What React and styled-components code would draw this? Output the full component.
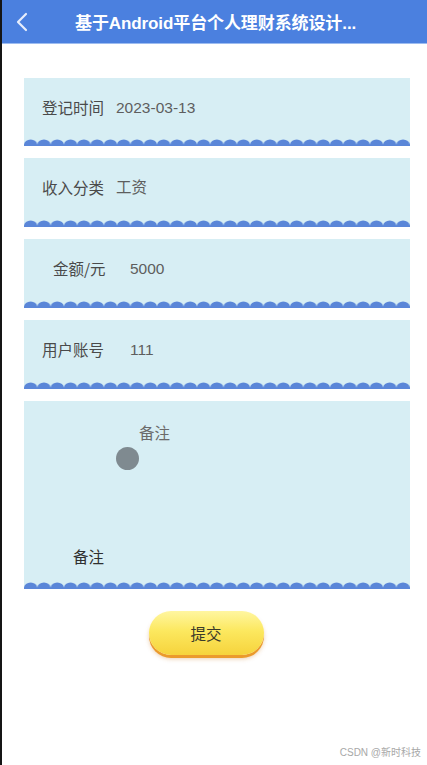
import React from "react";
import styled, { createGlobalStyle } from "styled-components";

const Global = createGlobalStyle`
  html, body { margin: 0; padding: 0; background: #fff; }
  body { font-family: "Liberation Sans", "Noto Sans CJK SC", sans-serif; }
  * { box-sizing: border-box; }
`;

const Screen = styled.div`
  width: 427px;
  height: 765px;
  border-left: 2px solid #151515;
  background: #fff;
  display: flex;
  flex-direction: column;
  position: relative;
  overflow: hidden;
`;

const Header = styled.header`
  height: 44px;
  background: #4b80df;
  display: flex;
  align-items: center;
  border-bottom: 1px solid #9dbcf0;
  flex-shrink: 0;
`;

const Back = styled.button`
  border: 0;
  background: transparent;
  padding: 0;
  margin-left: 12px;
  width: 16px;
  height: 24px;
  display: flex;
  align-items: center;
  justify-content: center;
`;

const Title = styled.h1`
  margin: 0 0 0 45px;
  color: #fff;
  font-family: "Liberation Sans", "Noto Sans CJK SC", sans-serif;
  font-weight: 700;
  font-size: 17px;
  letter-spacing: -0.1px;
`;

const Form = styled.main`
  display: flex;
  flex-direction: column;
  gap: 12px;
  padding: 34px 17px 0 22px;
`;

const Card = styled.div`
  background: #d7eef4;
  display: flex;
  flex-direction: column;
  height: ${(p) => p.$h}px;
`;

const Row = styled.div`
  flex: 1;
  display: flex;
  align-items: flex-start;
  padding: 18px 0 0 ${(p) => p.$pl}px;
  font-family: "Noto Sans CJK SC", "Liberation Sans", sans-serif;
  font-size: 15.5px;
`;

const Label = styled.span`
  color: #4a4a4a;
  width: ${(p) => p.$w}px;
  flex-shrink: 0;
`;

const Value = styled.span`
  color: #5e5e5e;
  font-family: "Liberation Sans", "Noto Sans CJK SC", sans-serif;
  font-size: 15.5px;
  line-height: 23px;
`;

const NoteBody = styled.div`
  flex: 1;
  display: flex;
  flex-direction: column;
  font-family: "Noto Sans CJK SC", "Liberation Sans", sans-serif;
  font-size: 15.5px;
`;

const NoteHint = styled.span`
  color: #6a6a6a;
  margin: 20px 0 0 115px;
  line-height: 22px;
`;

const Dot = styled.span`
  width: 23px;
  height: 23px;
  border-radius: 50%;
  background: #7f8a90;
  margin: 4px 0 0 92px;
  filter: blur(0.5px);
`;

const NoteLabel = styled.span`
  color: #2f2f2f;
  margin: auto 0 15px 49px;
  line-height: 22px;
`;

const WaveSvg = styled.svg`
  display: block;
  width: 100%;
  height: 7px;
  flex-shrink: 0;
`;

const Wave = ({ id }) => (
  <WaveSvg viewBox="0 0 386 7" preserveAspectRatio="none">
    <defs>
      <pattern id={id} x="0" y="0" width="13.3" height="7" patternUnits="userSpaceOnUse">
        <path d="M0 7 L0 6 A6.65 5.5 0 0 1 13.3 6 L13.3 7 Z" fill="#5a86d8" />
      </pattern>
    </defs>
    <rect x="0" y="0" width="386" height="7" fill={`url(#${id})`} />
    <rect x="0" y="5.5" width="386" height="1.5" fill="#5a86d8" />
  </WaveSvg>
);

const BtnWrap = styled.div`
  display: flex;
  justify-content: center;
  padding: 22px 0 0 0;
  margin-left: -17px;
`;

const Submit = styled.button`
  width: 115px;
  height: 44px;
  border: 0;
  border-radius: 22px;
  background: linear-gradient(180deg, #fff6a0 0%, #fce85f 45%, #f6d33c 100%);
  box-shadow: 0 3px 0 #eb9a2c, 0 4px 4px rgba(200, 120, 30, 0.35);
  color: #3a3a2a;
  font-family: "Noto Sans CJK SC", sans-serif;
  font-size: 15.5px;
  padding: 0;
`;

const Watermark = styled.div`
  position: absolute;
  right: 6px;
  bottom: 6px;
  color: #a8a8a8;
  font-family: "Liberation Sans", "Noto Sans CJK SC", sans-serif;
  font-size: 10px;
`;

const fields = [
  { label: "登记时间", value: "2023-03-13", pl: 18, w: 74 },
  { label: "收入分类", value: "工资", pl: 18, w: 74 },
  { label: "金额/元", value: "5000", pl: 29, w: 77 },
  { label: "用户账号", value: "111", pl: 18, w: 88 },
];

export default function App() {
  return (
    <>
      <Global />
      <Screen>
        <Header>
          <Back aria-label="返回">
            <svg width="12" height="20" viewBox="0 0 12 20">
              <path d="M10 2 L2 10 L10 18" stroke="#e8eefc" strokeWidth="2.2" fill="none" strokeLinecap="round" strokeLinejoin="round" />
            </svg>
          </Back>
          <Title>基于Android平台个人理财系统设计...</Title>
        </Header>
        <Form>
          {fields.map((f, i) => (
            <Card key={f.label} $h={i === 0 ? 68 : 69}>
              <Row $pl={f.pl}>
                <Label $w={f.w}>{f.label}</Label>
                <Value>{f.value}</Value>
              </Row>
              <Wave id={`w${i}`} />
            </Card>
          ))}
          <Card $h={188}>
            <NoteBody>
              <NoteHint>备注</NoteHint>
              <Dot />
              <NoteLabel>备注</NoteLabel>
            </NoteBody>
            <Wave id="w5" />
          </Card>
        </Form>
        <BtnWrap>
          <Submit>提交</Submit>
        </BtnWrap>
        <Watermark>CSDN @新时科技</Watermark>
      </Screen>
    </>
  );
}
